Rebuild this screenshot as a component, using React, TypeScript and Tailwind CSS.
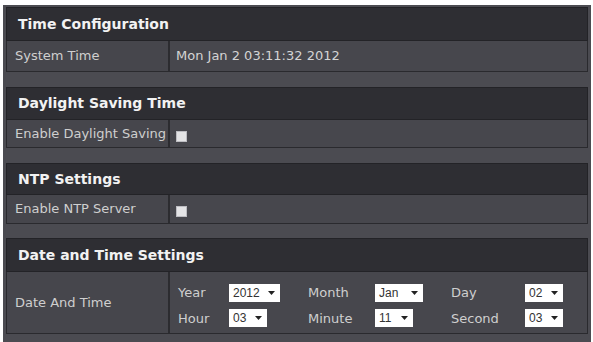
import React from "react";

const font = { fontFamily: '"DejaVu Sans", Verdana, sans-serif' };

function Header({ title, h }: { title: string; h: string }) {
  return (
    <div
      className={`${h} flex items-center bg-[#2e2e33] border border-[#232327] pl-[11px] text-[14px] font-bold text-[#f2f2f2]`}
    >
      {title}
    </div>
  );
}

function Row({ label, h, children }: { label: string; h: string; children: React.ReactNode }) {
  return (
    <div className={`${h} flex border-x border-b border-[#2a2a2e]`}>
      <div className="w-[163px] flex items-center bg-[#46464c] pl-[8px] border-r-2 border-[#2c2c30] text-[13px] text-[#cfcfcf] whitespace-nowrap">
        {label}
      </div>
      <div className="flex-1 flex items-center bg-[#47474d] pl-[6px] text-[13px] text-[#d4d4d4]">{children}</div>
    </div>
  );
}

function Checkbox() {
  return <div className="w-[11px] h-[11px] bg-[#e4e4e6] border border-[#bdbdc2] mt-[5px]" />;
}

function Select({ value, w }: { value: string; w: string }) {
  return (
    <div
      className={`${w} h-[18px] bg-white flex items-center justify-between pl-[4px] pr-[5px] text-[12px] text-[#333]`}
      style={{ fontFamily: '"Liberation Sans", Arial, sans-serif' }}
    >
      <span>{value}</span>
      <svg width="7" height="4" viewBox="0 0 7 4">
        <path d="M0 0 L7 0 L3.5 4 Z" fill="#222" />
      </svg>
    </div>
  );
}

export default function App() {
  return (
    <div className="w-[593px] h-[342px] bg-white overflow-hidden" style={font}>
      <div className="ml-[3px] mt-[5px] w-[588px] h-[340px] bg-[#4b4b51] px-[3px] pt-[2px]">
        <Header title="Time Configuration" h="h-[34px]" />
        <Row label="System Time" h="h-[31px]">
          Mon Jan 2 03:11:32 2012
        </Row>

        <div className="mt-[15px]">
          <Header title="Daylight Saving Time" h="h-[33px]" />
          <Row label="Enable Daylight Saving" h="h-[28px]">
            <Checkbox />
          </Row>
        </div>

        <div className="mt-[15px]">
          <Header title="NTP Settings" h="h-[32px]" />
          <Row label="Enable NTP Server" h="h-[29px]">
            <Checkbox />
          </Row>
        </div>

        <div className="mt-[14px]">
          <Header title="Date and Time Settings" h="h-[34px]" />
          <Row label="Date And Time" h="h-[62px]">
            <div className="pl-[2px] pt-[6px] grid grid-cols-[51px_79px_67px_76px_74px_1fr] gap-y-[6px] items-center text-[13px] text-[#cfcfcf]">
              <span>Year</span>
              <Select value="2012" w="w-[51px]" />
              <span>Month</span>
              <Select value="Jan" w="w-[48px]" />
              <span>Day</span>
              <Select value="02" w="w-[38px]" />
              <span>Hour</span>
              <Select value="03" w="w-[38px]" />
              <span>Minute</span>
              <Select value="11" w="w-[38px]" />
              <span>Second</span>
              <Select value="03" w="w-[38px]" />
            </div>
          </Row>
        </div>
      </div>
    </div>
  );
}
